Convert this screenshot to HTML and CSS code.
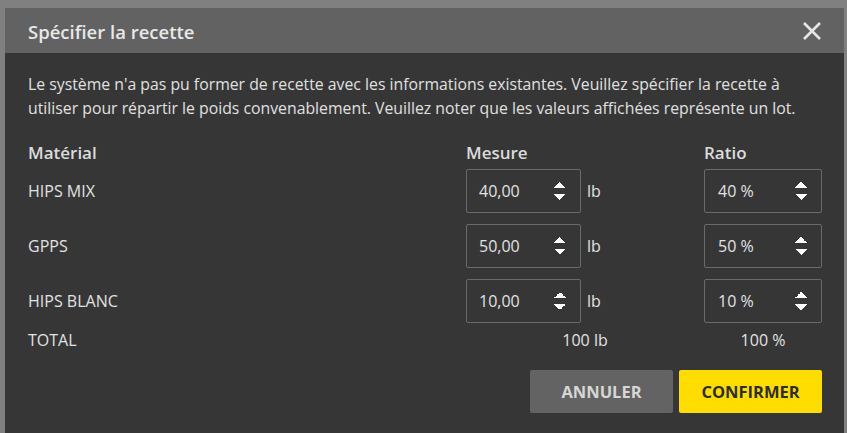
FILE: index.html
```html
<!DOCTYPE html>
<html>
<head>
	<meta charset="utf-8">
	<title>Spécifier la recette</title>
	<link rel="stylesheet" href="styles.css">
</head>
<body>
	<div class="dialog">
		<div class="head">
			<h2>Spécifier la recette</h2>
			<span class="close">
				<svg width="20" height="20" viewBox="0 0 20 20"><path d="M2 2L18 18M18 2L2 18" stroke="#e6e6e6" stroke-width="2.6" fill="none"/></svg>
			</span>
		</div>
		<div class="body">
			<p class="msg">Le système n'a pas pu former de recette avec les informations existantes. Veuillez spécifier la recette à utiliser pour répartir le poids convenablement. Veuillez noter que les valeurs affichées représente un lot.</p>
			<div class="grid">
				<div class="th">Matérial</div>
				<div class="th">Mesure</div>
				<div class="th">Ratio</div>

				<div class="name">HIPS MIX</div>
				<div class="measure"><div class="spin"><span>40,00</span><i></i></div><span class="unit">lb</span></div>
				<div class="spin"><span>40 %</span><i></i></div>

				<div class="name">GPPS</div>
				<div class="measure"><div class="spin"><span>50,00</span><i></i></div><span class="unit">lb</span></div>
				<div class="spin"><span>50 %</span><i></i></div>

				<div class="name">HIPS BLANC</div>
				<div class="measure"><div class="spin"><span>10,00</span><i></i></div><span class="unit">lb</span></div>
				<div class="spin"><span>10 %</span><i></i></div>

				<div class="total">TOTAL</div>
				<div class="total center">100 lb</div>
				<div class="total center">100 %</div>
			</div>
			<div class="actions">
				<button class="btn cancel">ANNULER</button>
				<button class="btn ok">CONFIRMER</button>
			</div>
		</div>
	</div>
</body>
</html>
```

FILE: styles.css
```css
body{margin: 0;background-color: #808080;font-family: 'Open Sans', sans-serif;color: #e2e2e2;}
.dialog{margin: 8px 3px 0 5px;background-color: #363636;height: 425px;}
.head{display: flex;align-items: center;justify-content: space-between;background-color: #626262;height: 45px;padding: 0 22px 0 23px;}
.head h2{margin: 1px 0 0;font-size: 18.5px;font-weight: 600;color: #e8e8e8;}
.close{display: flex;}
.body{padding: 19px 22px 0 23px;}
.msg{margin: 0;font-size: 15.8px;line-height: 24px;color: #e0e0e0;}
.grid{display: grid;grid-template-columns: 438px 238px 118px;grid-template-rows: 10px 44px 44px 44px 12px;align-items: center;margin-top: 28px;row-gap: 11px;font-size: 16px;}
.th{font-weight: 600;font-size: 17px;line-height: 20px;color: #dcdcdc;}
.measure{display: flex;align-items: center;}
.spin{display: flex;align-items: center;justify-content: space-between;box-sizing: border-box;width: 115px;height: 44px;border: 1px solid #6a6a6a;border-radius: 2px;padding: 0 14px 0 12px;}
.grid > .spin{width: 118px;padding-left: 13px;}
.spin i{width: 12px;height: 18px;background:
	linear-gradient(to bottom right, transparent 50%, #fff 50%) 0 0/6px 6px no-repeat,
	linear-gradient(to bottom left, transparent 50%, #fff 50%) 6px 0/6px 6px no-repeat,
	linear-gradient(to top right, transparent 50%, #fff 50%) 0 12px/6px 6px no-repeat,
	linear-gradient(to top left, transparent 50%, #fff 50%) 6px 12px/6px 6px no-repeat;}
.unit{margin-left: 6px;}
.total{line-height: 20px;}
.center{text-align: center;}
.actions{display: flex;justify-content: flex-end;gap: 6px;margin-top: 24px;}
.btn{width: 143px;height: 43px;border: none;border-radius: 2px;font-family: 'Open Sans', sans-serif;font-weight: bold;font-size: 16.5px;}
.cancel{background-color: #636363;color: #d6d6d6;}
.ok{background-color: #ffdd00;color: #2e2e2e;}
```
